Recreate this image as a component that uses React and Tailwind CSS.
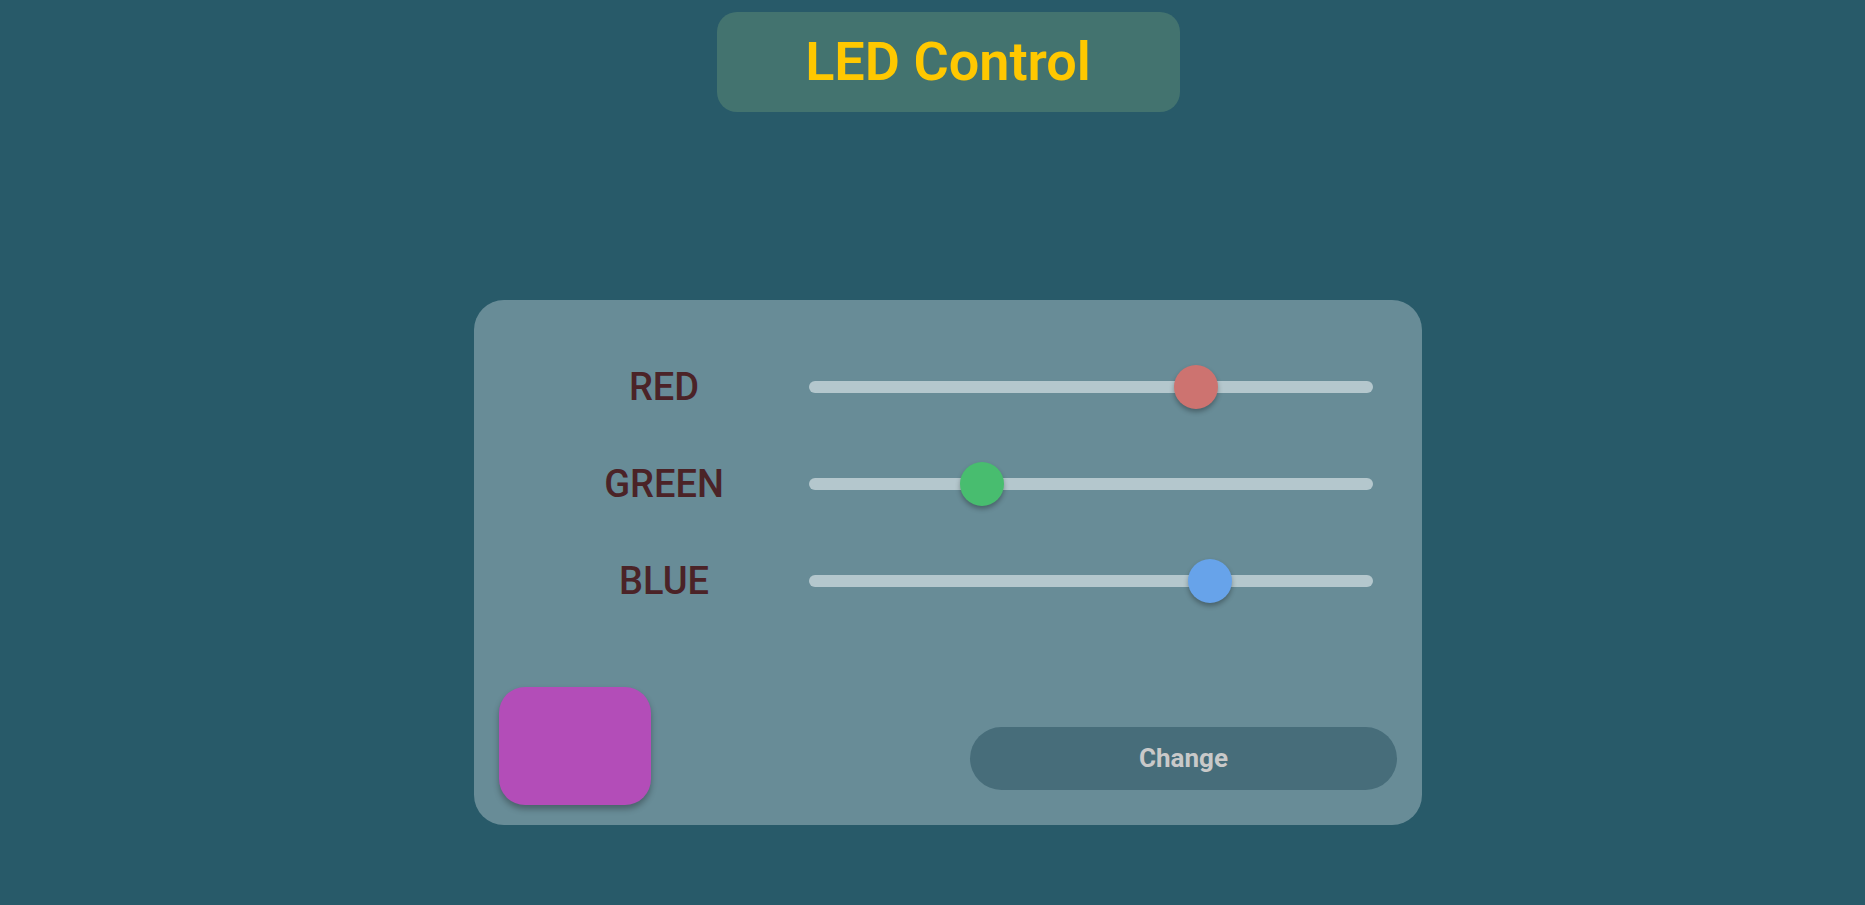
import { useState } from 'react';

const font = { fontFamily: 'Roboto, "DejaVu Sans Condensed", sans-serif' };

const channels = [
    { key: 'r', label: 'RED', thumb: 'bg-[#cd7370]' },
    { key: 'g', label: 'GREEN', thumb: 'bg-[#48bd6f]' },
    { key: 'b', label: 'BLUE', thumb: 'bg-[#67a3ea]' },
];

const Slider = ({ value, thumb }) => {
    // thumb travels inside the track, 22px in from each end
    const pct = value / 255;
    return (
        <div className="relative w-[564px] h-[44px] flex items-center">
            <div className="w-full h-[12px] rounded-full bg-[#b4c7cd]" />
            <div
                className={`absolute top-0 w-[44px] h-[44px] rounded-full shadow-[0_3px_5px_rgba(0,0,0,0.3)] ${thumb}`}
                style={{ left: `calc(${pct} * (100% - 44px))` }}
            />
        </div>
    );
};

const App = () => {
    // slider values vs. the colour last sent with "Change"
    const [values] = useState({ r: 179, g: 74, b: 186 });
    const [applied] = useState({ r: 179, g: 77, b: 184 });

    return (
        <div className="w-full min-h-[905px] bg-[#285a69] flex flex-col items-center pl-[31px]" style={font}>
            <div className="mt-[12px] w-[463px] h-[100px] rounded-[20px] bg-[#43736f] flex items-center justify-center">
                <h1 className="text-[54px] font-semibold text-[#ffc800] leading-none">LED Control</h1>
            </div>

            <div className="mt-[188px] w-[948px] h-[525px] rounded-[30px] bg-[#688c97] flex flex-col">
                <div className="pt-[38px] pl-[45px] flex flex-col">
                    {channels.map(c => (
                        <div key={c.key} className="h-[97px] flex items-center">
                            <span className="w-[290px] text-center text-[38px] font-medium text-[#4b2327] leading-none">
                                {c.label}
                            </span>
                            <Slider value={values[c.key]} thumb={c.thumb} />
                        </div>
                    ))}
                </div>

                <div className="mt-auto flex items-end justify-between pl-[25px] pr-[25px] pb-[20px]">
                    <div
                        className="w-[152px] h-[118px] rounded-[26px] shadow-[0_4px_6px_rgba(0,0,0,0.3)]"
                        style={{ backgroundColor: `rgb(${applied.r}, ${applied.g}, ${applied.b})` }}
                    />
                    <button className="mb-[15px] w-[427px] h-[63px] rounded-full bg-[#476d7a] text-[#c9c9c9] text-[26px] font-bold">
                        Change
                    </button>
                </div>
            </div>
        </div>
    );
};

export default App;
